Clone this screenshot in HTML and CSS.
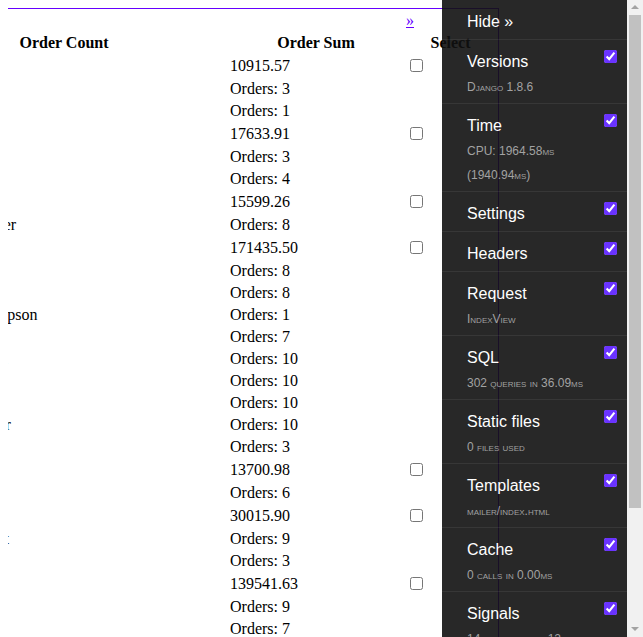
FILE: index.html
```html
<!DOCTYPE html>
<html>
<head>
<meta charset="utf-8">
<title>Orders</title>
<link rel="stylesheet" href="styles.css">
</head>
<body>
<table class="orders">
  <colgroup>
    <col class="col-count">
    <col class="col-gap">
    <col class="col-sum">
    <col class="col-select">
  </colgroup>
  <thead>
    <tr><td></td><td></td><td></td><td><a class="pager" href="#">&raquo;</a></td></tr>
    <tr><th>Order Count</th><th></th><th>Order Sum</th><th>Select</th></tr>
  </thead>
  <tbody>
    <tr><td></td><td></td><td>10915.57</td><td><input type="checkbox"></td></tr>
    <tr><td></td><td></td><td>Orders: 3</td><td></td></tr>
    <tr><td></td><td></td><td>Orders: 1</td><td></td></tr>
    <tr><td></td><td></td><td>17633.91</td><td><input type="checkbox"></td></tr>
    <tr><td>Baker</td><td></td><td>Orders: 3</td><td></td></tr>
    <tr><td></td><td></td><td>Orders: 4</td><td></td></tr>
    <tr><td></td><td></td><td>15599.26</td><td><input type="checkbox"></td></tr>
    <tr><td>Dauber</td><td></td><td>Orders: 8</td><td></td></tr>
    <tr><td></td><td></td><td>171435.50</td><td><input type="checkbox"></td></tr>
    <tr><td></td><td></td><td>Orders: 8</td><td></td></tr>
    <tr><td></td><td></td><td>Orders: 8</td><td></td></tr>
    <tr><td>Thompson</td><td></td><td>Orders: 1</td><td></td></tr>
    <tr><td></td><td></td><td>Orders: 7</td><td></td></tr>
    <tr><td>Nolan</td><td></td><td>Orders: 10</td><td></td></tr>
    <tr><td></td><td></td><td>Orders: 10</td><td></td></tr>
    <tr><td></td><td></td><td>Orders: 10</td><td></td></tr>
    <tr><td>Parker</td><td></td><td>Orders: 10</td><td></td></tr>
    <tr><td></td><td></td><td>Orders: 3</td><td></td></tr>
    <tr><td></td><td></td><td>13700.98</td><td><input type="checkbox"></td></tr>
    <tr><td></td><td></td><td>Orders: 6</td><td></td></tr>
    <tr><td></td><td></td><td>30015.90</td><td><input type="checkbox"></td></tr>
    <tr><td>Elliott</td><td></td><td>Orders: 9</td><td></td></tr>
    <tr><td></td><td></td><td>Orders: 3</td><td></td></tr>
    <tr><td></td><td></td><td>139541.63</td><td><input type="checkbox"></td></tr>
    <tr><td></td><td></td><td>Orders: 9</td><td></td></tr>
    <tr><td></td><td></td><td>Orders: 7</td><td></td></tr>
    <tr><td></td><td></td><td>Orders: 5</td><td></td></tr>
    <tr><td></td><td></td><td>25870.44</td><td><input type="checkbox"></td></tr>
  </tbody>
</table>

<div class="djdt">
  <ul class="djdt-panels">
    <li class="djdt-item"><a class="djdt-link" href="#">Hide &raquo;</a></li>
    <li class="djdt-item"><input type="checkbox" class="djdt-toggle" checked><a class="djdt-link" href="#">Versions<br><small class="djdt-sub">Django 1.8.6</small></a></li>
    <li class="djdt-item"><input type="checkbox" class="djdt-toggle" checked><a class="djdt-link" href="#">Time<br><small class="djdt-sub">CPU: 1964.58ms</small><br><small class="djdt-sub">(1940.94ms)</small></a></li>
    <li class="djdt-item"><input type="checkbox" class="djdt-toggle" checked><a class="djdt-link" href="#">Settings</a></li>
    <li class="djdt-item"><input type="checkbox" class="djdt-toggle" checked><a class="djdt-link" href="#">Headers</a></li>
    <li class="djdt-item"><input type="checkbox" class="djdt-toggle" checked><a class="djdt-link" href="#">Request<br><small class="djdt-sub">IndexView</small></a></li>
    <li class="djdt-item"><input type="checkbox" class="djdt-toggle" checked><a class="djdt-link" href="#">SQL<br><small class="djdt-sub">302 queries in 36.09ms</small></a></li>
    <li class="djdt-item"><input type="checkbox" class="djdt-toggle" checked><a class="djdt-link" href="#">Static files<br><small class="djdt-sub">0 files used</small></a></li>
    <li class="djdt-item"><input type="checkbox" class="djdt-toggle" checked><a class="djdt-link" href="#">Templates<br><small class="djdt-sub">mailer/index.html</small></a></li>
    <li class="djdt-item"><input type="checkbox" class="djdt-toggle" checked><a class="djdt-link" href="#">Cache<br><small class="djdt-sub">0 calls in 0.00ms</small></a></li>
    <li class="djdt-item"><input type="checkbox" class="djdt-toggle" checked><a class="djdt-link" href="#">Signals<br><small class="djdt-sub">14 receivers of 12 signals</small></a></li>
    <li class="djdt-item"><input type="checkbox" class="djdt-toggle" checked><a class="djdt-link" href="#">Logging<br><small class="djdt-sub">0 messages</small></a></li>
    <li class="djdt-item"><input type="checkbox" class="djdt-toggle"><a class="djdt-link" href="#">Redirects</a></li>
  </ul>
</div>

<div class="scrollbar" aria-hidden="true">
  <div class="scroll-btn">
    <svg width="16" height="15" viewBox="0 0 16 15"><polygon points="4,9 12,9 8,5" fill="#a3a3a3"/></svg>
  </div>
  <div class="scroll-track">
    <div class="scroll-thumb"></div>
  </div>
  <div class="scroll-btn">
    <svg width="16" height="15" viewBox="0 0 16 15"><polygon points="4,5 12,5 8,9" fill="#a3a3a3"/></svg>
  </div>
</div>
</body>
</html>
```

FILE: styles.css
```css
html, body {
  font-family: "Liberation Serif", "Times New Roman", serif;
  font-size: 16px;
  color: #000;
  background: #fff;
}

body {
  margin: 8px;
}

.orders {
  margin-left: -43px;
  width: 534px;
  table-layout: fixed;
  border: 1px solid #6600ff;
  border-spacing: 2px;
}

.orders th,
.orders td {
  padding: 1px;
  white-space: nowrap;
}

.orders th {
  font-weight: bold;
  text-align: center;
}

.orders td {
  text-align: left;
}

.col-count { width: 192px; }
.col-gap { width: 65px; }
.col-sum { width: 174px; }
.col-select { width: 91px; }

.pager {
  color: #6600ff;
  text-decoration: underline;
}

/* Debug toolbar */
.djdt {
  position: fixed;
  top: 0;
  right: 16px;
  bottom: 0;
  width: 185px;
  background-color: #111;
  opacity: 0.9;
  overflow: hidden;
  z-index: 1000;
  font-family: "Liberation Sans", Arial, sans-serif;
}

.djdt-panels {
  margin: 0;
  padding: 0;
  list-style: none;
}

.djdt-item {
  border-bottom: 1px solid #222;
  color: #fff;
  margin: 0;
  padding: 0;
}

.djdt-toggle {
  float: right;
  margin: 10px;
  width: 13px;
  height: 13px;
  accent-color: #5a1dff;
}

.djdt-link {
  display: block;
  font-size: 16px;
  line-height: 24px;
  padding: 10px 10px 5px 25px;
  color: #fff;
  text-decoration: none;
}

.djdt-sub {
  font-size: 12px;
  line-height: 1;
  color: #999;
  font-variant: small-caps;
}

/* Scrollbar drawn beside the toolbar */
.scrollbar {
  position: fixed;
  top: 0;
  right: 0;
  bottom: 0;
  width: 16px;
  background: #f1f1f1;
  display: flex;
  flex-direction: column;
  z-index: 1001;
}

.scroll-btn {
  height: 15px;
  flex: none;
}

.scroll-btn svg {
  display: block;
}

.scroll-track {
  flex: 1;
  padding: 0 2px;
}

.scroll-thumb {
  height: 493px;
  background: #c1c1c1;
}
```
